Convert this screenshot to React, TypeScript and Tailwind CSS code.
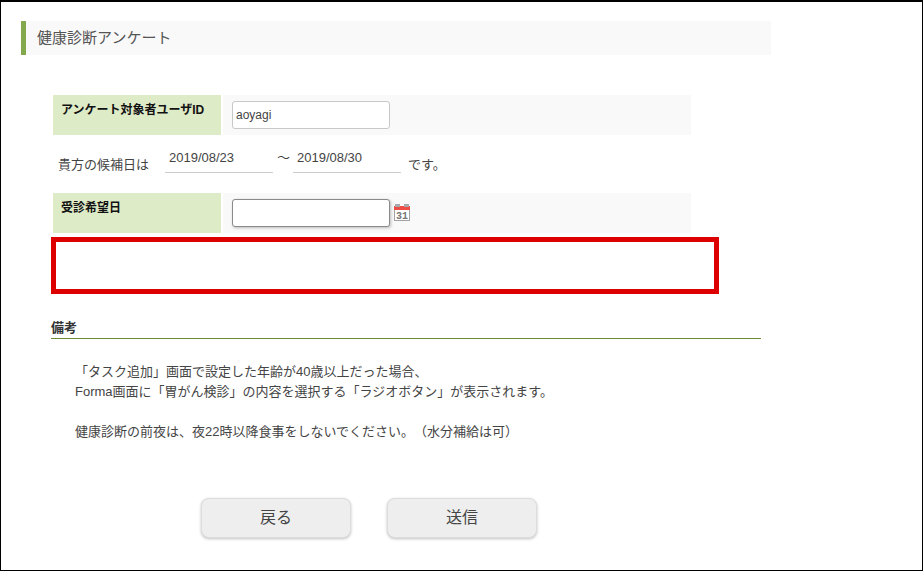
const FONT = "font-['Liberation_Sans','Noto_Sans_CJK_JP',sans-serif]"

function CalendarIcon() {
  return (
    <svg width="16" height="17" viewBox="0 0 16 17" className="ml-[4px] mt-[-1px] shrink-0">
      <rect x="0.5" y="3.5" width="15" height="13" fill="#fff" stroke="#a3a3a3" />
      <rect x="0" y="2" width="16" height="4" fill="#ee4b44" />
      <rect x="1" y="0" width="5" height="3" fill="#a8a8a8" />
      <rect x="10" y="0" width="5" height="3" fill="#a8a8a8" />
      <text x="2" y="15" fontSize="10" fontWeight="700" fill="#777" fontFamily="'Liberation Mono', monospace">31</text>
    </svg>
  )
}

function Label({ children }: { children: React.ReactNode }) {
  return (
    <div className="w-[168px] shrink-0 bg-[#deebc7] pl-[8px] pt-[6px] text-[12px] leading-[18px] font-bold text-[#111]">
      {children}
    </div>
  )
}

function DateText({ value }: { value: string }) {
  return (
    <div className="h-[23px] w-[108px] border-b border-[#ccc] pl-[4px] text-[13px] leading-[16px] text-[#444]">{value}</div>
  )
}

export default function App() {
  return (
    <div className={`${FONT} box-border h-[571px] w-[923px] overflow-hidden border border-t-2 border-black bg-white pl-[20px] pt-[19px] text-[#444] [text-spacing-trim:space-all]`}>
      <div className="flex h-[34px] w-[750px] items-center border-l-[5px] border-[#84a94c] bg-[#f9f9f9] pl-[11px] text-[15px] text-[#555]">
        健康診断アンケート
      </div>

      <div className="ml-[32px] mt-[40px] w-[638px]">
        <div className="flex h-[40px]">
          <Label>アンケート対象者ユーザID</Label>
          <div className="ml-[2px] flex flex-1 items-center bg-[#f9f9f9] pl-[9px]">
            <div className="flex h-[28px] w-[158px] items-center rounded-[3px] border border-[#c8c8c8] bg-white pl-[3px] text-[12px] text-[#444]">aoyagi</div>
          </div>
        </div>

        <div className="flex h-[58px] items-start pt-[15px] text-[13px]">
          <span className="ml-[5px] mt-[7px] w-[107px] leading-[16px]">貴方の候補日は</span>
          <DateText value="2019/08/23" />
          <span className="ml-[4px] mr-[3px] w-[13px] text-center leading-[16px]">～</span>
          <DateText value="2019/08/30" />
          <span className="ml-[7px] mt-[7px] leading-[16px]">です。</span>
        </div>

        <div className="flex h-[40px]">
          <Label>受診希望日</Label>
          <div className="ml-[2px] flex flex-1 items-center bg-[#f9f9f9] pl-[9px]">
            <div className="h-[28px] w-[158px] rounded-[3px] border border-[#8a8a8a] bg-white shadow-[1px_1px_3px_rgba(0,0,0,0.25)]" />
            <CalendarIcon />
          </div>
        </div>
      </div>

      <div className="ml-[30px] mt-[4px] h-[57px] w-[668px] border-[5px] border-[#dd0000] bg-white" />

      <div className="ml-[30px] mt-[25px] w-[710px] border-b border-[#6b8e34] pb-[1px] text-[13px] leading-[18px] font-bold text-[#333]">
        備考
      </div>

      <div className="ml-[54px] mt-[23px] text-[13px] leading-[20px] text-[#444]">
        <p>「タスク追加」画面で設定した年齢が40歳以上だった場合、</p>
        <p>Forma画面に「胃がん検診」の内容を選択する「ラジオボタン」が表示されます。</p>
        <p className="mt-[20px]">健康診断の前夜は、夜22時以降食事をしないでください。（水分補給は可）</p>
      </div>

      <div className="ml-[180px] mt-[56px] flex gap-[36px]">
        <button className="h-[40px] w-[150px] rounded-[8px] border border-[#ddd] bg-[#eeeeee] text-[16px] text-[#444] shadow-[0_1px_3px_rgba(0,0,0,0.25)]">戻る</button>
        <button className="h-[40px] w-[150px] rounded-[8px] border border-[#ddd] bg-[#eeeeee] text-[16px] text-[#444] shadow-[0_1px_3px_rgba(0,0,0,0.25)]">送信</button>
      </div>
    </div>
  )
}
